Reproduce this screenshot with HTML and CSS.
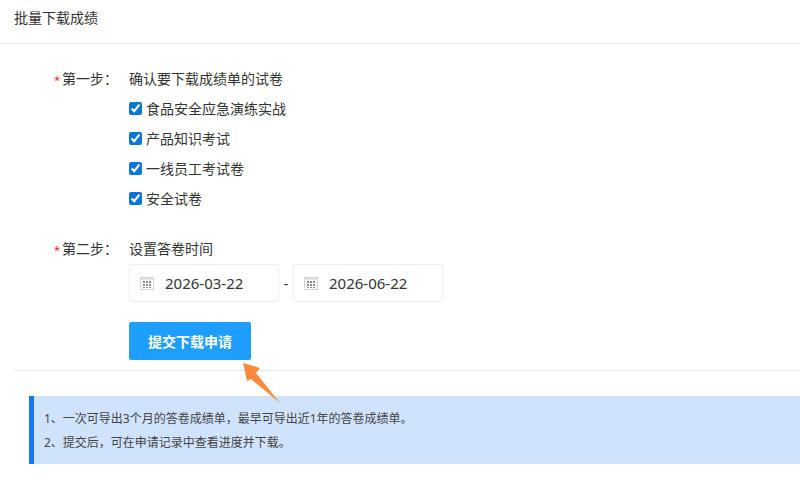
FILE: index.html
```html
<!DOCTYPE html>
<html lang="zh-CN">
<head>
<meta charset="utf-8">
<title>批量下载成绩</title>
<link rel="stylesheet" href="styles.css">
</head>
<body>
<header class="header">批量下载成绩</header>
<main class="form">
  <section class="step">
    <div class="label"><span class="star">*</span>第一步：</div>
    <div class="content">
      <div class="line">确认要下载成绩单的试卷</div>
      <label class="check"><input type="checkbox" checked>食品安全应急演练实战</label>
      <label class="check"><input type="checkbox" checked>产品知识考试</label>
      <label class="check"><input type="checkbox" checked>一线员工考试卷</label>
      <label class="check"><input type="checkbox" checked>安全试卷</label>
    </div>
  </section>
  <section class="step step-two">
    <div class="label"><span class="star">*</span>第二步：</div>
    <div class="content">
      <div class="line">设置答卷时间</div>
      <div class="dates">
        <div class="date">
          <svg class="cal" viewBox="0 0 14 14" width="14" height="14"><rect x="0.5" y="1.5" width="13" height="12" fill="#fff" stroke="#d4d4d4"/><rect x="1" y="2" width="12" height="2" fill="#e4e4e4"/><g fill="#8a8a8a"><rect x="3" y="5" width="2" height="2"/><rect x="6" y="5" width="2" height="2"/><rect x="9" y="5" width="2" height="2"/><rect x="3" y="8" width="2" height="2"/><rect x="6" y="8" width="2" height="2"/><rect x="9" y="8" width="2" height="2"/><rect x="3" y="11" width="2" height="1"/><rect x="6" y="11" width="2" height="1"/><rect x="9" y="11" width="2" height="1"/></g></svg>
          <span>2026-03-22</span>
        </div>
        <span class="dash">-</span>
        <div class="date">
          <svg class="cal" viewBox="0 0 14 14" width="14" height="14"><rect x="0.5" y="1.5" width="13" height="12" fill="#fff" stroke="#d4d4d4"/><rect x="1" y="2" width="12" height="2" fill="#e4e4e4"/><g fill="#8a8a8a"><rect x="3" y="5" width="2" height="2"/><rect x="6" y="5" width="2" height="2"/><rect x="9" y="5" width="2" height="2"/><rect x="3" y="8" width="2" height="2"/><rect x="6" y="8" width="2" height="2"/><rect x="9" y="8" width="2" height="2"/><rect x="3" y="11" width="2" height="1"/><rect x="6" y="11" width="2" height="1"/><rect x="9" y="11" width="2" height="1"/></g></svg>
          <span>2026-06-22</span>
        </div>
      </div>
      <button class="submit" type="button">提交下载申请</button>
    </div>
  </section>
</main>
<hr class="divider">
<aside class="notice">
  <p>1、一次可导出3个月的答卷成绩单，最早可导出近1年的答卷成绩单。</p>
  <p>2、提交后，可在申请记录中查看进度并下载。</p>
</aside>
<svg class="arrow" viewBox="0 0 40 44" width="40" height="44"><polygon points="1,1 18,6 14,11 38,41 9,17 5,19" fill="#fb8b3a"/></svg>
</body>
</html>
```
FILE: styles.css
```css
* { box-sizing: border-box; }
html, body { margin: 0; padding: 0; }
body {
  position: relative;
  width: 800px;
  height: 480px;
  overflow: hidden;
  background: #fff;
  color: #333;
  font-family: "Noto Sans", "Noto Sans CJK SC", sans-serif;
  font-size: 14px;
}
.header {
  height: 44px;
  padding-left: 14px;
  line-height: 36px;
  border-bottom: 1px solid #eee;
}
.form { padding-top: 20px; }
.step { display: flex; }
.step-two { margin-top: 20px; }
.label {
  width: 129px;
  padding-left: 54px;
  line-height: 30px;
  white-space: nowrap;
}
.star {
  display: inline-block;
  width: 8px;
  color: #f5222d;
  font-size: 11px;
}
.line { line-height: 30px; height: 30px; }
.check {
  display: flex;
  align-items: center;
  height: 30px;
  padding-bottom: 2px;
}
.check input {
  width: 13px;
  height: 13px;
  margin: 0 4px 0 0;
  accent-color: #0b76d6;
}
.dates { display: flex; align-items: center; }
.date {
  display: flex;
  align-items: center;
  width: 150px;
  height: 38px;
  padding-left: 10px;
  border: 1px solid #eee;
  border-radius: 2px;
  font-size: 15px;
}
.cal { margin-right: 11px; flex: none; }
.dash { width: 14px; text-align: center; }
.submit {
  display: block;
  width: 122px;
  height: 38px;
  margin-top: 20px;
  padding: 0;
  border: 0;
  border-radius: 2px;
  background: #1e9fff;
  color: #fff;
  font: bold 14px "Noto Sans", "Noto Sans CJK SC", sans-serif;
}
.divider {
  height: 1px;
  margin: 10px 0 25px 14px;
  border: 0;
  background: #e4e4e4;
}
.notice {
  margin-left: 29px;
  padding: 11px 0 9px 10px;
  border-left: 5px solid #1677f5;
  background: #d0e3fc;
  color: #444;
  font-size: 12px;
  line-height: 24px;
}
.notice p { margin: 0; }
.arrow {
  position: absolute;
  left: 242px;
  top: 362px;
}
```
